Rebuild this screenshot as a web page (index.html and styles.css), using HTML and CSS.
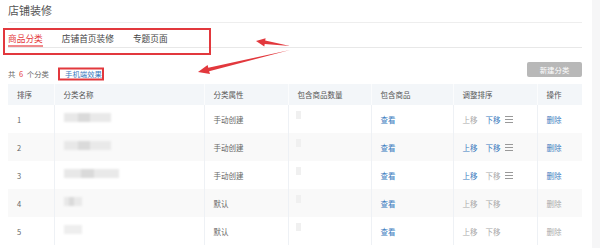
FILE: index.html
```html
<!doctype html>
<html>
<head>
    <meta charset="utf-8">
    <title>店铺装修</title>
    <link rel="stylesheet" href="styles.css">
</head>
<body>
<div id="layout">
    <div id="content">
        <h2 class="pageTitle">店铺装修</h2>
        <div class="tabs">
            <span class="tab active">商品分类</span>
            <span class="tab">店铺首页装修</span>
            <span class="tab">专题页面</span>
        </div>
        <div class="toolbar">
            <span class="count">共 <em>6</em> 个分类</span>
            <a class="link mobile">手机端效果</a>
            <button class="buttonNew">新建分类</button>
        </div>
        <table class="catTable">
            <colgroup>
                <col style="width:46px">
                <col style="width:150px">
                <col style="width:84px">
                <col style="width:83px">
                <col style="width:82px">
                <col style="width:84px">
                <col style="width:45px">
            </colgroup>
            <tr>
                <th>排序</th>
                <th>分类名称</th>
                <th>分类属性</th>
                <th>包含商品数量</th>
                <th>包含商品</th>
                <th>调整排序</th>
                <th>操作</th>
            </tr>
            <tr>
                <td>1</td>
                <td><span class="blur" style="width:47px"></span></td>
                <td>手动创建</td>
                <td><span class="blurDot"></span></td>
                <td><a class="link">查看</a></td>
                <td><span class="off">上移</span><a class="link">下移</a><i class="drag"></i></td>
                <td><a class="link">删除</a></td>
            </tr>
            <tr>
                <td>2</td>
                <td><span class="blur" style="width:47px"></span></td>
                <td>手动创建</td>
                <td><span class="blurDot"></span></td>
                <td><a class="link">查看</a></td>
                <td><a class="link">上移</a><a class="link">下移</a><i class="drag"></i></td>
                <td><a class="link">删除</a></td>
            </tr>
            <tr>
                <td>3</td>
                <td><span class="blur" style="width:55px"></span></td>
                <td>手动创建</td>
                <td><span class="blurDot"></span></td>
                <td><a class="link">查看</a></td>
                <td><a class="link">上移</a><span class="off">下移</span><i class="drag"></i></td>
                <td><a class="link">删除</a></td>
            </tr>
            <tr>
                <td>4</td>
                <td><span class="blur" style="width:18px"></span></td>
                <td>默认</td>
                <td><span class="blurDot"></span></td>
                <td><a class="link">查看</a></td>
                <td><span class="off">上移</span><span class="off">下移</span></td>
                <td><span class="off">删除</span></td>
            </tr>
            <tr>
                <td>5</td>
                <td><span class="blur light" style="width:18px"></span></td>
                <td>默认</td>
                <td><span class="blurDot"></span></td>
                <td><a class="link">查看</a></td>
                <td><span class="off">上移</span><span class="off">下移</span></td>
                <td><span class="off">删除</span></td>
            </tr>
        </table>
    </div>
    <div class="rail"></div>
</div>

<!-- annotation marks drawn over the page -->
<svg class="marks" width="600" height="248" viewBox="0 0 600 248">
    <rect x="4" y="29" width="206" height="25" fill="none" stroke="#e2383d" stroke-width="2"/>
    <rect x="59" y="68.5" width="44" height="11" fill="none" stroke="#e2383d" stroke-width="2"/>
    <polygon fill="#e2383d" points="256,41 265.6,38.2 265.2,40.6 290,46 264.7,43.9 264.3,46.4"/>
    <polygon fill="#e2383d" points="198,72 207.6,65 208.3,67.8 290,50 209.1,71.2 210,74"/>
</svg>
</body>
</html>
```

FILE: styles.css
```css
html {
    background-color: #fff;
    font-family: "Noto Sans CJK SC", "Liberation Sans", sans-serif;
    color: #666;
}

body {
    margin: 0;
}

#layout {
    display: flex;
    height: 248px;
    overflow: hidden;
}

#content {
    width: 574px;
    flex: none;
    padding-left: 8px;
}

.rail {
    width: 8px;
    flex: none;
    margin-left: 10px;
    background-color: #f6f6f7;
}

.pageTitle {
    margin: 0;
    height: 22px;
    line-height: 20px;
    font-size: 11px;
    font-weight: normal;
    color: #555;
    border-bottom: 1px solid #eeeeee;
}

.tabs {
    display: flex;
    gap: 19px;
    height: 24px;
    border-bottom: 1px solid #e8e8e8;
}

.tab {
    padding-top: 10px;
    font-size: 8.7px;
    line-height: 12px;
    color: #444;
    border-bottom: 2px solid transparent;
}

.tab.active {
    color: #e4393c;
    border-bottom-color: #f08a8c;
}

.toolbar {
    display: flex;
    align-items: flex-start;
    height: 22px;
    padding-top: 14px;
    font-size: 7.4px;
}

.count, .mobile {
    margin-top: 5px;
    line-height: 14px;
}

.count em {
    font-style: normal;
    color: #e4393c;
    padding: 0 2px;
}

.mobile {
    margin-left: 16px;
}

.buttonNew {
    margin-left: auto;
    width: 55px;
    height: 15px;
    padding: 0;
    border: none;
    border-radius: 2px;
    background-color: #b8b8b8;
    color: #fff;
    font-family: inherit;
    font-size: 7.4px;
}

.link {
    color: #3b7cc0;
}

.off {
    color: #aaa;
}

.catTable {
    width: 574px;
    border-collapse: collapse;
    font-size: 7.5px;
    table-layout: fixed;
}

.catTable th {
    height: 21px;
    padding: 0 0 0 9px;
    text-align: left;
    font-weight: normal;
    color: #555;
    background-color: #f3f6f9;
    border-left: 1px solid #fbfcfd;
    white-space: nowrap;
}

.catTable td {
    height: 28px;
    padding: 0 0 0 9px;
    border-left: 1px solid #eef1f5;
    vertical-align: middle;
    white-space: nowrap;
}

.catTable th:first-child, .catTable td:first-child {
    border-left: none;
}

.catTable tr:nth-child(odd) td {
    background-color: #f9f9f9;
}

.catTable td .link, .catTable td .off {
    margin-right: 8px;
}

.blur {
    display: inline-block;
    height: 9px;
    vertical-align: middle;
    background: linear-gradient(90deg, #e8e8e8 0 30%, #dadada 30% 55%, #e9e9e9 55% 100%);
    filter: blur(1px);
    margin-bottom: 4px;
}

.blur.light {
    background: #eeeeee;
}

.blurDot {
    display: inline-block;
    width: 5px;
    height: 8px;
    margin-left: -2px;
    background-color: #f0f0f0;
    filter: blur(0.6px);
    margin-bottom: 6px;
}

.drag {
    display: inline-block;
    width: 8px;
    height: 5px;
    border-top: 1px solid #999;
    border-bottom: 1px solid #999;
    position: relative;
    top: -1px;
    margin-left: -4px;
    vertical-align: middle;
    background: linear-gradient(#fff0 2px, #999 2px 3px, #fff0 3px);
}

.marks {
    position: absolute;
    left: 0;
    top: 0;
    pointer-events: none;
}
```
